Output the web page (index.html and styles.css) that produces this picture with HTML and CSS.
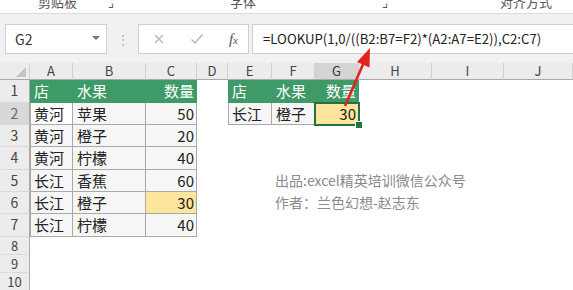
FILE: index.html
```html
<!DOCTYPE html>
<html lang="zh">
<head>
<meta charset="utf-8">
<link rel="stylesheet" href="styles.css">
</head>
<body>
<div class="page">
  <div class="ribbon">
    <span class="rl r1">剪贴板</span>
    <span class="rl r2">⌟</span>
    <span class="rl r3">字体</span>
    <span class="rl r4">⌟</span>
    <span class="rl r5">对齐方式</span>
  </div>
  <div class="fbar">
    <div class="namebox"><span>G2</span><span class="drop"></span></div>
    <div class="dots">⋮</div>
    <div class="fxbox">
      <svg class="ico" width="12" height="12" viewBox="0 0 12 12"><path d="M2 2 L10 10 M10 2 L2 10" stroke="#b8b8b8" stroke-width="1.4" fill="none"/></svg>
      <svg class="ico" width="14" height="12" viewBox="0 0 14 12"><path d="M1.5 6.5 L5 10 L12.5 1.5" stroke="#b8b8b8" stroke-width="1.5" fill="none"/></svg>
      <span class="fx"><i>f</i><i class="x">x</i></span>
    </div>
    <div class="formula">=LOOKUP(1,0/((B2:B7=F2)*(A2:A7=E2)),C2:C7)</div>
  </div>
  <div class="sheet">
    <div class="corner"></div>
    <div class="ch">A</div><div class="ch">B</div><div class="ch">C</div><div class="ch">D</div><div class="ch">E</div><div class="ch">F</div><div class="ch sel">G</div><div class="ch">H</div><div class="ch">I</div><div class="ch">J</div>

    <div class="rh">1</div>
    <div class="c g">店</div><div class="c g">水果</div><div class="c g n">数量</div><div class="c"></div><div class="c g">店</div><div class="c g">水果</div><div class="c g n">数量</div><div class="c"></div><div class="c"></div><div class="c"></div>

    <div class="rh sel">2</div>
    <div class="c b bl w">黄河</div><div class="c b">苹果</div><div class="c b n">50</div><div class="c"></div><div class="c b bl">长江</div><div class="c b">橙子</div><div class="c y n active">30</div><div class="c"></div><div class="c"></div><div class="c"></div>

    <div class="rh">3</div>
    <div class="c b bl">黄河</div><div class="c b">橙子</div><div class="c b n">20</div><div class="c"></div><div class="c"></div><div class="c"></div><div class="c"></div><div class="c"></div><div class="c"></div><div class="c"></div>

    <div class="rh">4</div>
    <div class="c b bl">黄河</div><div class="c b">柠檬</div><div class="c b n">40</div><div class="c"></div><div class="c"></div><div class="c"></div><div class="c"></div><div class="c"></div><div class="c"></div><div class="c"></div>

    <div class="rh">5</div>
    <div class="c b bl">长江</div><div class="c b">香蕉</div><div class="c b n">60</div><div class="c"></div><div class="c"></div><div class="c note">出品:excel精英培训微信公众号</div><div class="c"></div><div class="c"></div><div class="c"></div><div class="c"></div>

    <div class="rh">6</div>
    <div class="c b bl">长江</div><div class="c b">橙子</div><div class="c b y n">30</div><div class="c"></div><div class="c"></div><div class="c note">作者：兰色幻想-赵志东</div><div class="c"></div><div class="c"></div><div class="c"></div><div class="c"></div>

    <div class="rh">7</div>
    <div class="c b bl">长江</div><div class="c b">柠檬</div><div class="c b n">40</div><div class="c"></div><div class="c"></div><div class="c"></div><div class="c"></div><div class="c"></div><div class="c"></div><div class="c"></div>

    <div class="rh short">8</div><div class="c span"></div>
    <div class="rh short">9</div><div class="c span"></div>
    <div class="rh short">10</div><div class="c span"></div>
  </div>
  <svg class="arrow" width="573" height="290" viewBox="0 0 573 290">
    <line x1="345" y1="106" x2="364" y2="62" stroke="#e3231b" stroke-width="2.6"/>
    <polygon points="370,48 357,62 369.5,67.5" fill="#e3231b"/>
  </svg>
</div>
</body>
</html>
```

FILE: styles.css
```css
* { box-sizing: border-box; margin: 0; padding: 0; }
html, body { width: 573px; height: 290px; overflow: hidden; background: #fff; }
body { font-family: "Noto Sans CJK SC", "Noto Sans", sans-serif; color: #222; }
.page { position: relative; width: 573px; height: 290px; }

.ribbon {
  height: 14px; overflow: hidden; background: #fff; position: relative;
  border-bottom: 1px solid #dcdcdc; display: flex; align-items: flex-start;
}
.rl { font-size: 13px; color: #555; line-height: 13px; margin-top: -5px; }
.r1 { margin-left: 38px; }
.r2 { margin-left: 31px; }
.r3 { margin-left: 116px; }
.r4 { margin-left: 126px; }
.r5 { margin-left: 112px; }

.fbar {
  height: 49px; background: #f1f1f1; display: flex; align-items: flex-start;
  padding-top: 10px;
}
.namebox {
  margin-left: 5px; width: 102px; height: 30px; background: #fff;
  border: 1px solid #cfcfcf; display: flex; align-items: center;
  justify-content: space-between; padding: 0 6px 0 9px; font-size: 14px; color: #333;
}
.drop { width: 0; height: 0; border-left: 4px solid transparent; border-right: 4px solid transparent; border-top: 4px solid #777; margin-top: -3px; }
.dots { width: 31px; text-align: center; color: #bbb; font-size: 14px; line-height: 30px; }
.fxbox {
  width: 111px; height: 30px; background: #fff; border: 1px solid #cfcfcf;
  display: flex; align-items: center; padding: 0 10px 0 14px; justify-content: space-between;
}
.fx { font-family: "Liberation Serif", serif; font-size: 15px; color: #555; font-style: italic; }
.fx .x { font-size: 11px; }
.formula {
  flex: 1; margin-left: 3px; height: 30px; background: #fff; border: 1px solid #cfcfcf;
  border-right: none; font-size: 13.2px; line-height: 28px; padding-left: 10px; color: #222;
  white-space: nowrap; overflow: hidden;
}

.sheet {
  display: grid;
  grid-template-columns: 30px 43px 73px 51px 31px 44px 43px 44px 73px 72px 69px;
  grid-template-rows: 17px 23px 22px 22px 23px 22px 22px 23px 18px 18px 18px;
}
.corner { background: #ececec; border-right: 1px solid #cfcfcf; border-bottom: 1px solid #a8a8a8; position: relative; }
.corner::after {
  content: ""; position: absolute; right: 3px; bottom: 2px; width: 0; height: 0;
  border-left: 10px solid transparent; border-bottom: 10px solid #c4c4c4;
}
.ch {
  background: #ececec; border-right: 1px solid #d0d0d0; border-bottom: 1px solid #a8a8a8;
  font-size: 13px; color: #444; text-align: center; line-height: 16px;
}
.ch.sel { background: #d4d4d4; color: #333; }
.rh {
  background: #ececec; border-right: 1px solid #a8a8a8; border-bottom: 1px solid #dadada;
  font-size: 14px; color: #444; text-align: center; line-height: 21px;
}
.rh.short { font-size: 13px; line-height: 17px; overflow: hidden; }
.rh.sel { background: #d8d8d8; color: #666; }
.c { font-size: 15px; line-height: 21px; padding: 0 3px 0 4px; white-space: nowrap; }
.span { grid-column: 2 / 12; }
.g { background: #3e9a66; color: #fff; }
.b { background: #f6f6f6; box-shadow: inset -1px -1px 0 #a9a9a9; }
.bl { box-shadow: inset -1px -1px 0 #a9a9a9, inset 1px 0 0 #a9a9a9; }
.w { background: #fff; }
.n { text-align: right; }
.y { background: #fde59b; }
.active { position: relative; outline: 2px solid #217346; outline-offset: -1px; }
.active::after {
  content: ""; position: absolute; right: -4px; bottom: -4px; width: 6px; height: 6px;
  background: #217346; border: 1px solid #fff;
}
.note { font-size: 14px; color: #8a8a8a; overflow: visible; padding-left: 3px; }
.arrow { position: absolute; left: 0; top: 0; pointer-events: none; }
```
